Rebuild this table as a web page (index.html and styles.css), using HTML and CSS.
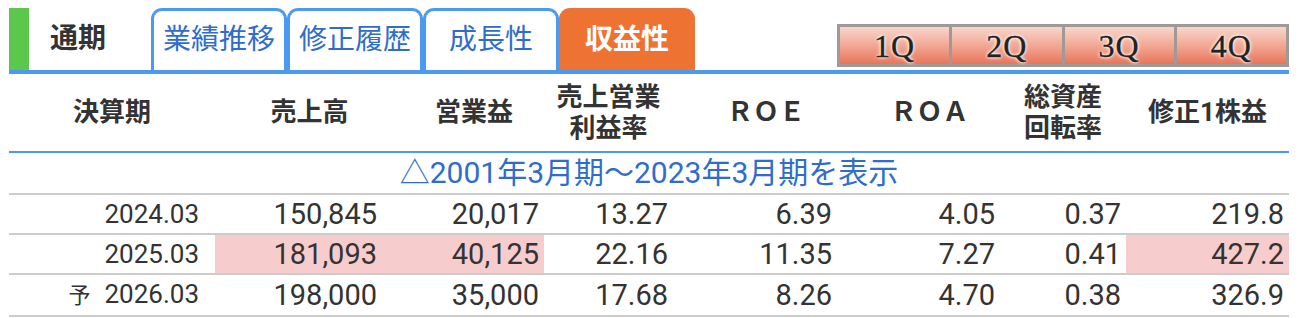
FILE: index.html
```html
<!DOCTYPE html>
<html lang="ja">
<head>
<meta charset="utf-8">
<link rel="stylesheet" href="styles.css">
</head>
<body>
<div class="wrap">
  <div class="tabbar">
    <div class="green"></div>
    <div class="tab-current">通期</div>
    <div class="tab">業績推移</div>
    <div class="tab">修正履歴</div>
    <div class="tab">成長性</div>
    <div class="tab tab-active">収益性</div>
    <div class="qgroup">
      <div class="qbtn">1Q</div>
      <div class="qbtn">2Q</div>
      <div class="qbtn">3Q</div>
      <div class="qbtn">4Q</div>
    </div>
  </div>
  <table class="data">
    <colgroup>
      <col class="c1"><col class="c2"><col class="c3"><col class="c4"><col class="c5"><col class="c6"><col class="c7"><col class="c8">
    </colgroup>
    <thead>
      <tr>
        <th>決算期</th>
        <th class="shift">売上高</th>
        <th class="shift">営業益</th>
        <th>売上営業<br>利益率</th>
        <th class="shift">ＲＯＥ</th>
        <th class="shift">ＲＯＡ</th>
        <th>総資産<br>回転率</th>
        <th>修正1株益</th>
      </tr>
    </thead>
    <tbody>
      <tr class="info"><td colspan="8">△2001年3月期〜2023年3月期を表示</td></tr>
      <tr>
        <td class="date">2024.03</td>
        <td>150,845</td><td>20,017</td><td>13.27</td><td>6.39</td><td>4.05</td><td>0.37</td><td>219.8</td>
      </tr>
      <tr>
        <td class="date">2025.03</td>
        <td class="hl">181,093</td><td class="hl">40,125</td><td>22.16</td><td>11.35</td><td>7.27</td><td>0.41</td><td class="hl">427.2</td>
      </tr>
      <tr>
        <td class="date"><span class="yo">予</span>2026.03</td>
        <td>198,000</td><td>35,000</td><td>17.68</td><td>8.26</td><td>4.70</td><td>0.38</td><td>326.9</td>
      </tr>
    </tbody>
  </table>
</div>
</body>
</html>
```
FILE: styles.css
```css
html, body {
  margin: 0;
  padding: 0;
  background: #fff;
}
body {
  font-family: Roboto, "Noto Sans CJK JP", sans-serif;
  color: #333;
}
.wrap {
  padding: 8px 0 0 9px;
  width: 1280px;
}
.tabbar {
  display: flex;
  align-items: flex-end;
  height: 62px;
  border-bottom: 4px solid #4a9af2;
}
.green {
  width: 20px;
  height: 62px;
  background: #5cc84b;
}
.tab-current {
  width: 101px;
  padding-left: 21px;
  height: 62px;
  line-height: 62px;
  font-size: 28px;
  font-weight: bold;
  color: #333;
}
.tab {
  box-sizing: border-box;
  width: 136px;
  height: 62px;
  border: 3px solid #4a9af2;
  border-bottom: none;
  border-radius: 11px 11px 0 0;
  text-align: center;
  line-height: 58px;
  font-size: 28px;
  color: #2f6dcc;
}
.tab-active {
  border-color: #ee7232;
  background: #ee7232;
  color: #fff;
  font-weight: bold;
}
.qgroup {
  margin-left: auto;
  margin-bottom: 3px;
  box-sizing: border-box;
  width: 452px;
  height: 43px;
  border: 3px solid #a09a96;
  background: #a09a96;
  display: flex;
  gap: 3px;
}
.qbtn {
  flex: 1;
  background: linear-gradient(#f8d6cc 0%, #f3ad99 45%, #e8755b 100%);
  text-align: center;
  font-family: "Liberation Serif", serif;
  font-size: 32px;
  letter-spacing: 1px;
  line-height: 38px;
  color: #222;
  -webkit-text-stroke: 0.4px #222;
  text-shadow: 0 0 2px #fff, 0 0 3px #fff, 0 0 4px #fff;
}
.data {
  width: 1280px;
  table-layout: fixed;
  border-collapse: separate;
  border-spacing: 0;
}
.c1 { width: 206px; }
.c2 { width: 167px; }
.c3 { width: 162px; }
.c4 { width: 129px; }
.c5 { width: 164px; }
.c6 { width: 163px; }
.c7 { width: 126px; }
.c8 { width: 163px; }
.data th {
  height: 79px;
  padding: 0;
  font-size: 26px;
  line-height: 31px;
  font-weight: bold;
  text-align: center;
  color: #333;
  border-bottom: 2px solid #4a9af2;
  box-sizing: border-box;
}
.data th.shift {
  padding-left: 22px;
}
.data td {
  box-sizing: border-box;
  height: 40px;
  padding: 0 5px 0 0;
  font-size: 29px;
  line-height: 38px;
  text-align: right;
  border-bottom: 2px solid #cccccc;
  white-space: nowrap;
}
.data tr.info td {
  height: 42px;
  text-align: center;
  padding: 0;
  line-height: 40px;
  color: #2f6dcc;
  font-size: 30px;
}
.data td.date {
  font-size: 26px;
  padding-right: 16px;
}
.data td.hl {
  background: #f7cccc;
}
.yo {
  font-size: 22px;
  margin-right: 14px;
}
```
